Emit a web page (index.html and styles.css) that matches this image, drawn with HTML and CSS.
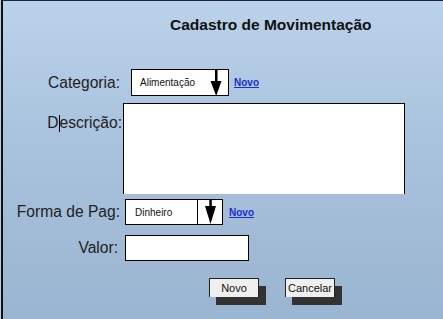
FILE: index.html
```html
<!DOCTYPE html>
<html lang="pt">
  <head>
    <meta charset="UTF-8" />
    <meta content="width=device-width, initial-scale=1.0" name="viewport" />
    <link rel="stylesheet" href="styles.css">
  </head>
  <body>
    <div class="window">
      <h1 class="title">Cadastro de Movimentação</h1>

      <form class="form">
        <div class="row row-cat">
          <label class="label">Categoria:</label>
          <div class="select select-cat">
            <span class="select-text">Alimentação</span>
            <svg class="arrow" width="12" height="26" viewBox="0 0 12 26">
              <rect x="5" y="0" width="2.5" height="13" fill="#000" />
              <polygon points="0.5,11 11.5,11 6.2,26" fill="#000" />
            </svg>
          </div>
          <a href="#" class="link">Novo</a>
        </div>

        <div class="row row-desc">
          <label class="label label-desc">D<span class="caret"></span>escrição:</label>
          <div class="textarea"></div>
        </div>

        <div class="row row-pag">
          <label class="label">Forma de Pag:</label>
          <div class="select select-pag">
            <span class="select-text">Dinheiro</span>
            <span class="select-btn">
              <svg width="11" height="24" viewBox="0 0 11 24">
                <rect x="4.3" y="0" width="2.5" height="8" fill="#000" />
                <polygon points="0,6 11,6 5.5,24" fill="#000" />
              </svg>
            </span>
          </div>
          <a href="#" class="link">Novo</a>
        </div>

        <div class="row row-valor">
          <label class="label">Valor:</label>
          <div class="input"></div>
        </div>

        <div class="buttons">
          <button type="button" class="btn">Novo</button>
          <button type="button" class="btn">Cancelar</button>
        </div>
      </form>
    </div>
  </body>
</html>
```

FILE: styles.css
```css
html,
body {
  margin: 0;
  height: 100%;
  background: #b9d0e7;
}
body {
  padding-left: 1px;
  box-sizing: border-box;
  font-family: "Liberation Sans", Arial, sans-serif;
}
.window {
  height: 100%;
  box-sizing: border-box;
  border-top: 1px solid #1c2838;
  border-left: 2px solid #111;
  background: linear-gradient(#bad2ea, #a9c2dd 45%, #9ab5d1);
  overflow: hidden;
}
.title {
  margin: 0;
  padding: 15px 0 0 167px;
  font-size: 15.5px;
  font-weight: bold;
  color: #111;
  line-height: 18px;
}
.form {
  padding-top: 35px;
}
.row {
  display: flex;
  align-items: center;
}
.label {
  width: 117px;
  flex: none;
  text-align: right;
  font-size: 15.6px;
  color: #222;
}
.caret {
  display: inline-block;
  width: 1px;
  height: 17px;
  background: #000;
  vertical-align: -4px;
}
.select {
  display: flex;
  align-items: center;
  box-sizing: border-box;
  width: 98px;
  height: 27px;
  border: 1px solid #000;
  background: #fff;
}
.select-text {
  font-size: 10px;
  color: #111;
}
.select-cat {
  margin-left: 11px;
}
.select-cat .select-text {
  padding-left: 8px;
}
.select-cat .arrow {
  margin-left: auto;
  margin-right: 6px;
  align-self: stretch;
}
.link {
  margin-left: 5px;
  font-size: 10px;
  font-weight: bold;
  color: #1a2fcc;
  text-decoration: underline;
}
.row-desc {
  margin-top: 7px;
  align-items: flex-start;
}
.label-desc {
  padding-top: 11px;
  width: 119px;
}
.textarea {
  margin-left: 1px;
  box-sizing: border-box;
  width: 282px;
  height: 91px;
  border: 1px solid #000;
  border-bottom: 0;
  background: #fff;
}
.row-pag {
  margin-top: 5px;
}
.select-pag {
  margin-left: 5px;
  height: 26px;
}
.select-pag .select-text {
  padding-left: 9px;
}
.select-btn {
  margin-left: auto;
  width: 24px;
  height: 24px;
  border-left: 1px solid #000;
  display: flex;
  justify-content: center;
}
.row-pag .link {
  margin-left: 6px;
}
.row-valor {
  margin-top: 10px;
}
.row-valor .label {
  width: 115px;
}
.input {
  margin-left: 7px;
  box-sizing: border-box;
  width: 124px;
  height: 26px;
  border: 1px solid #000;
  background: #fff;
}
.buttons {
  display: flex;
  gap: 26px;
  margin-top: 17px;
  padding-left: 206px;
}
.btn {
  width: 50px;
  height: 19px;
  padding: 0;
  border: 1px solid #222;
  border-bottom: 0;
  background: #efefef;
  font-family: "Liberation Sans", Arial, sans-serif;
  font-size: 11px;
  color: #111;
  box-shadow: 7px 8px 0 #333;
}
```
